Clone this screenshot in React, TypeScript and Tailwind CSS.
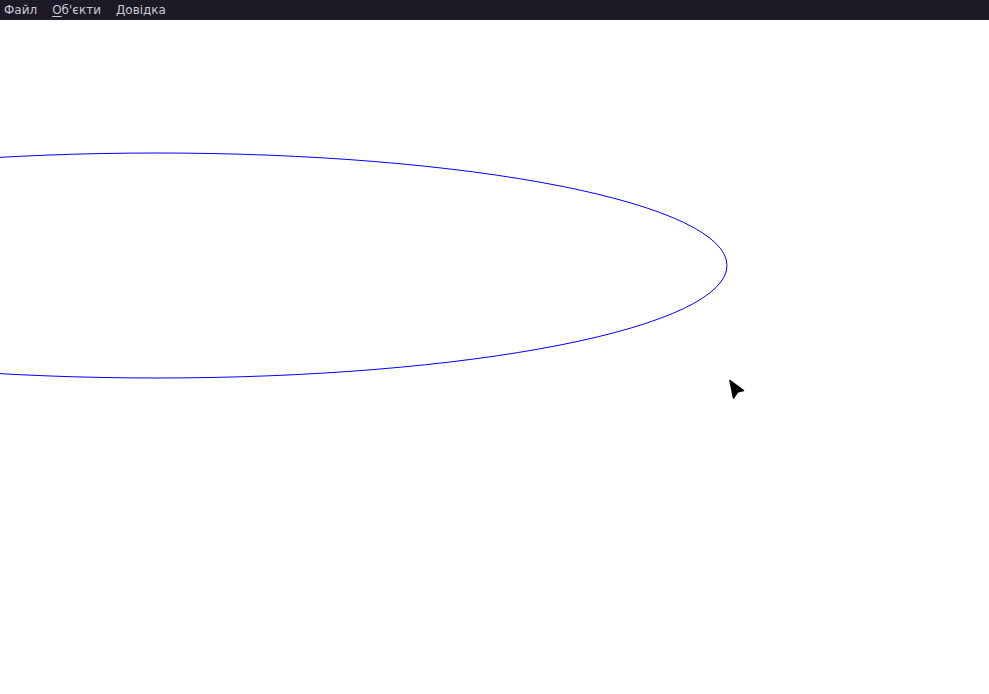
export default function App() {
  return (
    <div className="w-[989px] h-[694px] bg-white flex flex-col overflow-hidden" style={{ fontFamily: '"DejaVu Sans", sans-serif' }}>
      <div className="h-[20px] bg-[#1b1a26] flex items-center text-[12px] text-[#c9c9d3] leading-none pb-[1px]">
        <span className="ml-[4px]">Файл</span>
        <span className="ml-[15px]"><span className="underline underline-offset-2">О</span>б'єкти</span>
        <span className="ml-[15px]">Довідка</span>
      </div>
      <div className="relative flex-1">
        <svg width="989" height="674" className="block">
          <ellipse cx="157" cy="245.5" rx="570" ry="112.5" fill="none" stroke="#0000ff" strokeWidth="1" />
          <polygon points="730,360.5 743.5,370.5 737.5,372 733.5,378" fill="#000" stroke="#000" strokeWidth="1.5" strokeLinejoin="round" />
        </svg>
      </div>
    </div>
  );
}
